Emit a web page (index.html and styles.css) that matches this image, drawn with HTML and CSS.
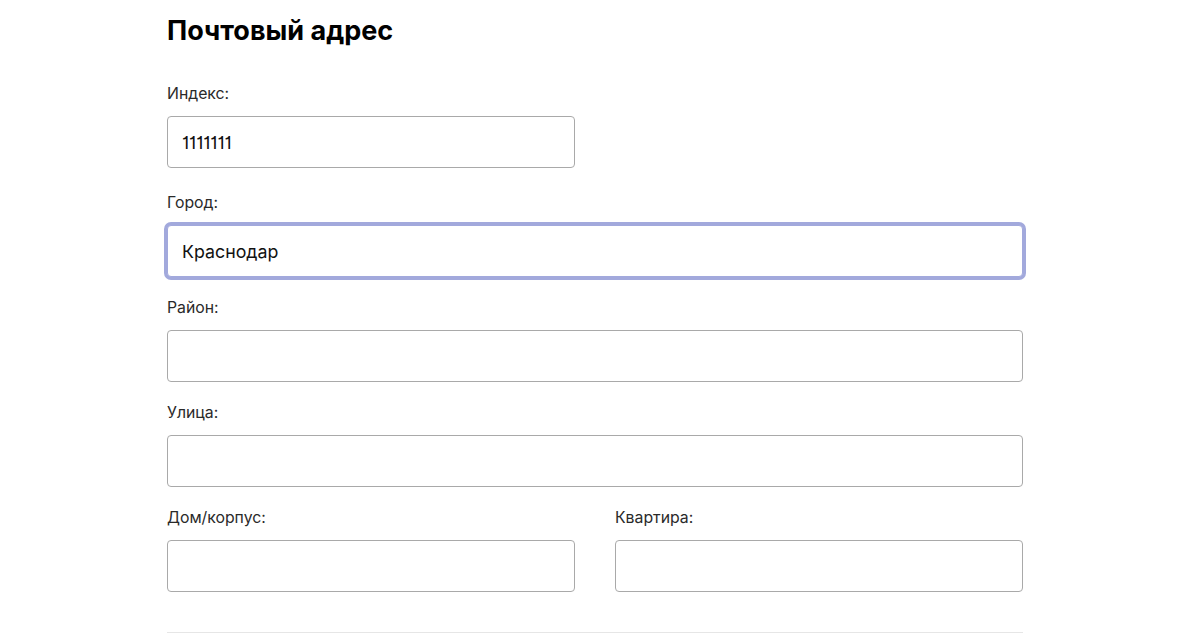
FILE: index.html
```html
<html>
  <head>
    <link rel="stylesheet" href="styles.css">
  </head>
  <body>
    <div class="address">
      <h2 class="address_title">Почтовый адрес</h2>

      <div class="field field_half">
        <label class="field_label">Индекс:</label>
        <input class="field_input" type="text" value="1111111">
      </div>

      <div class="field">
        <label class="field_label">Город:</label>
        <input class="field_input field_focus" type="text" value="Краснодар">
      </div>

      <div class="field">
        <label class="field_label">Район:</label>
        <input class="field_input" type="text" value="">
      </div>

      <div class="field">
        <label class="field_label">Улица:</label>
        <input class="field_input" type="text" value="">
      </div>

      <div class="field_row">
        <div class="field">
          <label class="field_label">Дом/корпус:</label>
          <input class="field_input" type="text" value="">
        </div>
        <div class="field">
          <label class="field_label">Квартира:</label>
          <input class="field_input" type="text" value="">
        </div>
      </div>

      <div class="address_line"></div>
    </div>
  </body>
</html>
```

FILE: styles.css
```css
body { margin: 0; background: #fff; font-family: Inter, Roboto, sans-serif; color: #222; }

.address { width: 856px; margin-left: 167px; padding-top: 14px; }
.address_title { margin: 0 0 36px; font-size: 27px; line-height: 34px; font-weight: 700; color: #000; }

.field { display: flex; flex-direction: column; gap: 12px; margin-bottom: 21px; }
.field_half { width: 408px; margin-bottom: 25px; }
.field_label { font-size: 15.8px; line-height: 20px; color: #2a2a2a; }

.field_input {
  box-sizing: border-box; width: 100%; height: 52px; padding: 0 14px;
  border: 1px solid #a9a9a9; border-radius: 4px; outline: none;
  font-family: Inter, Roboto, sans-serif; font-size: 17.8px; color: #111; background: #fff;
  font-feature-settings: "cv01";
}
.field_focus { border-color: #a2a9dc; box-shadow: 0 0 0 3px #a2a9dc; }

.field_row { display: grid; grid-template-columns: 1fr 1fr; column-gap: 40px; }
.field_row .field { margin-bottom: 0; }

.address_line { margin-top: 40px; height: 1px; background: #e6e6e6; }
```
